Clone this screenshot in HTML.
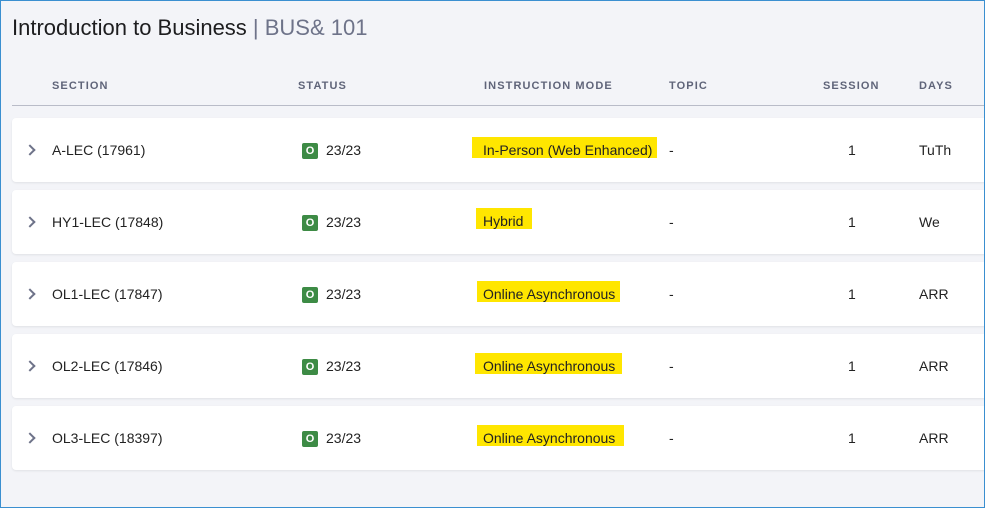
<!DOCTYPE html>
<html><head><style>
*{margin:0;padding:0;box-sizing:border-box}
body{width:985px;height:508px;background:#f3f4f8;font-family:"Liberation Sans",sans-serif;position:relative;overflow:hidden}
.fr{position:absolute;left:0;top:0;width:985px;height:508px;border:1px solid #3a8fd0;z-index:5;pointer-events:none}
.t{position:absolute;left:12px;top:15px;font-size:22px;color:#1d1d1f}
.t span{color:#6e7389}
.h{position:absolute;top:80px;font-size:11px;font-weight:bold;letter-spacing:1.1px;color:#5f6479}
.line{position:absolute;left:12px;right:0;top:105px;height:1px;background:#b9bcc8}
.card{position:absolute;left:12px;right:0;height:64px;background:#fff;border-radius:4px 0 0 4px;box-shadow:0 1px 2px rgba(0,0,0,.08)}
.c{position:absolute;top:0;line-height:64px;font-size:14px;color:#222}
.chev{position:absolute;left:14px;top:28px;width:8px;height:8px;border-right:2px solid #6e7389;border-top:2px solid #6e7389;transform:rotate(45deg)}
.o{display:inline-block;width:16px;height:16px;background:#3d8b45;color:#fff;font-size:11px;font-weight:bold;line-height:16px;text-align:center;border-radius:2px;vertical-align:1px;margin-right:8px}
.y{position:absolute;background:#ffe600;height:21px;font-size:14px;line-height:26px;color:#222}
</style></head><body>
<div class="fr"></div>
<div class="t">Introduction to Business <span>| BUS&amp; 101</span></div>
<div class="h" style="left:52px">SECTION</div>
<div class="h" style="left:298px">STATUS</div>
<div class="h" style="left:484px">INSTRUCTION MODE</div>
<div class="h" style="left:669px">TOPIC</div>
<div class="h" style="left:823px">SESSION</div>
<div class="h" style="left:919px">DAYS</div>
<div class="line"></div>

<div class="card" style="top:118px"><div class="chev"></div><div class="c" style="left:40px">A-LEC (17961)</div><div class="c" style="left:290px"><span class="o">O</span>23/23</div><div class="y" style="left:460px;top:19px;width:185px;padding-left:11px">In-Person (Web Enhanced)</div><div class="c" style="left:657px">-</div><div class="c" style="left:836px">1</div><div class="c" style="left:907px">TuTh</div></div>

<div class="card" style="top:190px"><div class="chev"></div><div class="c" style="left:40px">HY1-LEC (17848)</div><div class="c" style="left:290px"><span class="o">O</span>23/23</div><div class="y" style="left:464px;top:18px;width:56px;padding-left:7px">Hybrid</div><div class="c" style="left:657px">-</div><div class="c" style="left:836px">1</div><div class="c" style="left:907px">We</div></div>

<div class="card" style="top:262px"><div class="chev"></div><div class="c" style="left:40px">OL1-LEC (17847)</div><div class="c" style="left:290px"><span class="o">O</span>23/23</div><div class="y" style="left:465px;top:19px;width:143px;padding-left:6px">Online Asynchronous</div><div class="c" style="left:657px">-</div><div class="c" style="left:836px">1</div><div class="c" style="left:907px">ARR</div></div>

<div class="card" style="top:334px"><div class="chev"></div><div class="c" style="left:40px">OL2-LEC (17846)</div><div class="c" style="left:290px"><span class="o">O</span>23/23</div><div class="y" style="left:463px;top:19px;width:147px;padding-left:8px">Online Asynchronous</div><div class="c" style="left:657px">-</div><div class="c" style="left:836px">1</div><div class="c" style="left:907px">ARR</div></div>

<div class="card" style="top:406px"><div class="chev"></div><div class="c" style="left:40px">OL3-LEC (18397)</div><div class="c" style="left:290px"><span class="o">O</span>23/23</div><div class="y" style="left:465px;top:19px;width:147px;padding-left:6px">Online Asynchronous</div><div class="c" style="left:657px">-</div><div class="c" style="left:836px">1</div><div class="c" style="left:907px">ARR</div></div>
</body></html>
